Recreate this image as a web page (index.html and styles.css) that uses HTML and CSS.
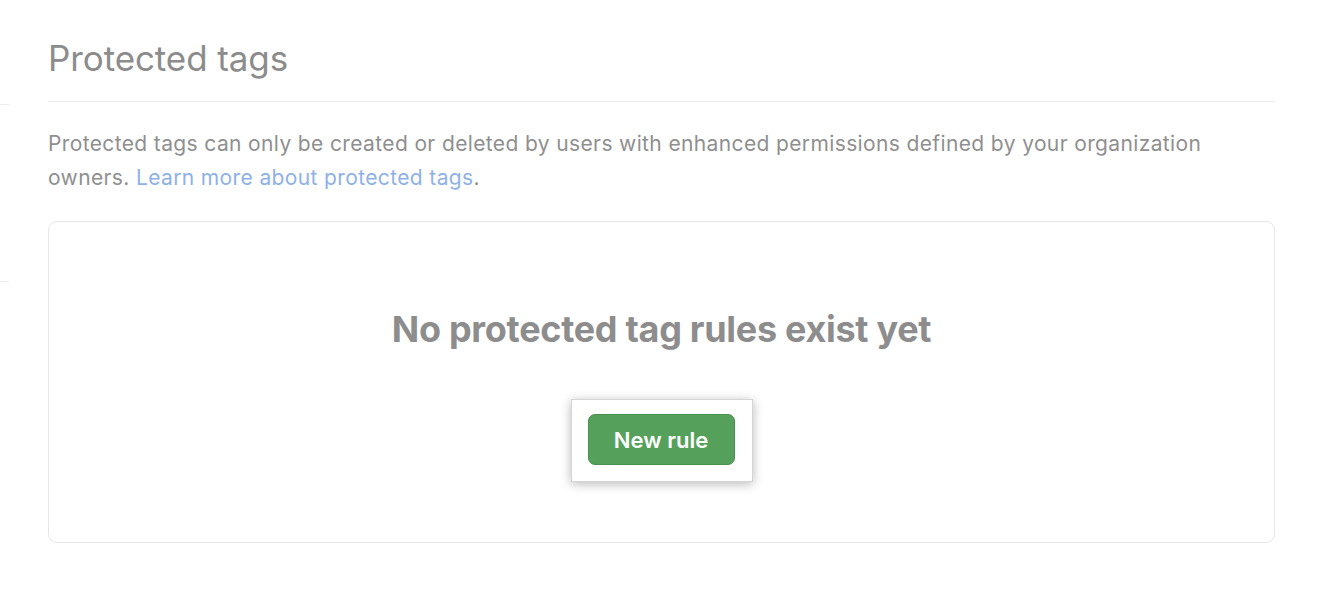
FILE: index.html
```html
<!DOCTYPE html>
<html>
<head>
<meta charset="utf-8">
<link rel="stylesheet" href="styles.css">
</head>
<body>
<div class="page">
  <aside class="side">
    <div class="side-line side-line-top"></div>
    <div class="side-line side-line-bottom"></div>
  </aside>
  <main class="main">
    <h2 class="title">Protected tags</h2>
    <p class="desc">Protected tags can only be created or deleted by users with enhanced permissions defined by your organization owners. <a class="link" href="#">Learn more about protected tags</a>.</p>
    <section class="blank">
      <h3 class="blank-title">No protected tag rules exist yet</h3>
      <div class="highlight">
        <button class="btn">New rule</button>
      </div>
    </section>
  </main>
</div>
</body>
</html>
```
FILE: styles.css
```css
* { box-sizing: border-box; }
html, body { margin: 0; padding: 0; background: #fff; }
body { font-family: Inter, "Liberation Sans", Arial, sans-serif; color: #8c8c8c; }
.page { display: flex; width: 1320px; height: 600px; }
.side { width: 48px; position: relative; }
.side-line { position: absolute; left: 0; width: 9px; height: 1px; background: #ececec; }
.side-line-top { top: 104px; }
.side-line-bottom { top: 281px; }
.main { width: 1227px; padding-top: 36px; }
.title { margin: 0; font-size: 35px; font-weight: 400; line-height: 44px; padding-bottom: 21px; border-bottom: 1px solid #ebebeb; color: #8c8c8c; letter-spacing: -0.1px; }
.desc { margin: 25px 0 0; padding-right: 20px; font-size: 21px; line-height: 34px; color: #8f8f8f; letter-spacing: 0.37px; }
.link { color: #8eb1e8; text-decoration: none; }
.blank { margin-top: 26px; height: 322px; border: 1px solid #e6e6e6; border-radius: 9px; display: flex; flex-direction: column; align-items: center; padding-top: 85px; }
.blank-title { margin: 0; font-size: 36px; font-weight: 700; line-height: 44px; color: #8d8d8d; letter-spacing: -0.3px; }
.highlight { margin-top: 48px; background: #fff; border: 1px solid #d5d5d5; padding: 14px 17px 16px 16px; box-shadow: 0 2px 10px rgba(0,0,0,0.28); }
.btn { display: block; width: 147px; height: 51px; border: 1px solid #4a9150; border-radius: 7px; background: #55a15b; color: #fff; font-family: inherit; font-size: 22px; font-weight: 600; padding: 0; cursor: pointer; }
```
